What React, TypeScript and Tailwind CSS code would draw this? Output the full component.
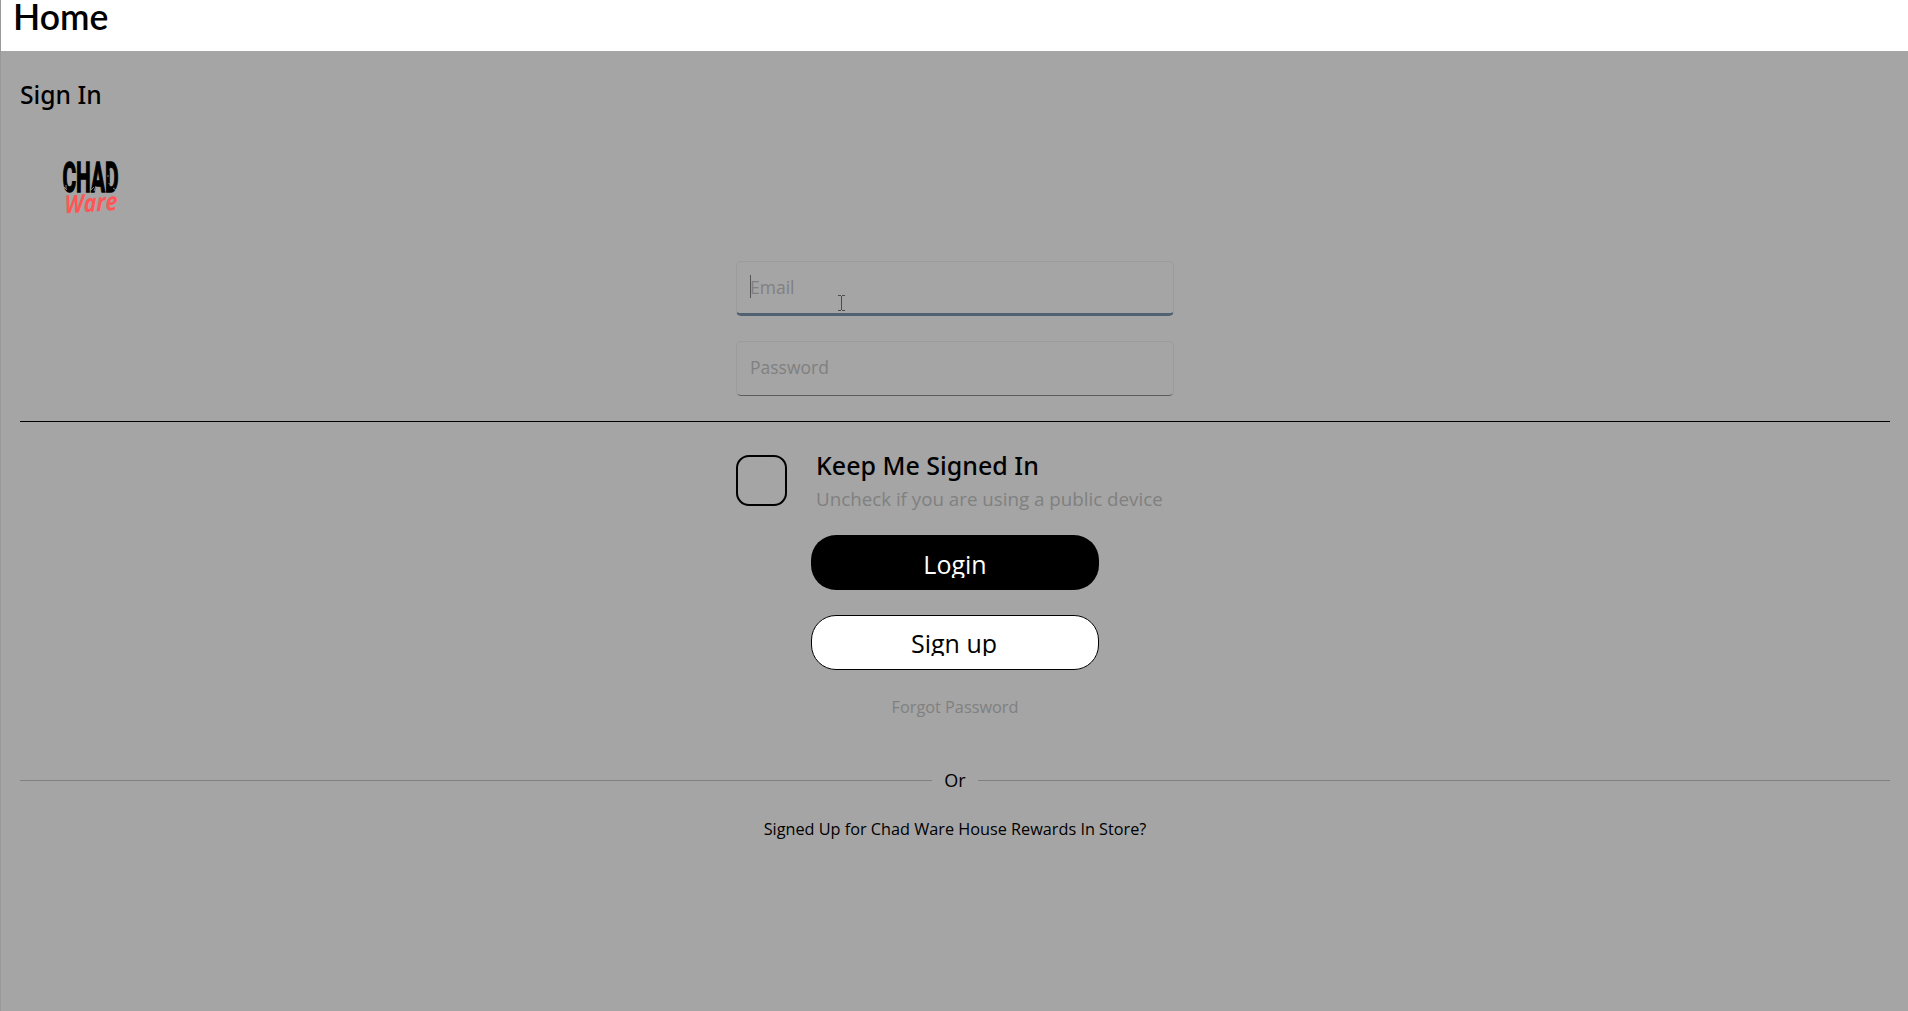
import React from "react";

function Logo() {
  return (
    <svg width="64" height="60" viewBox="0 0 64 60" className="block shrink-0 overflow-visible" aria-label="Chad Ware">
      <g transform="translate(2.500 36)">
        <text
          textLength="56"
          lengthAdjust="spacingAndGlyphs"
          fontSize="43"
          fontWeight="700"
          stroke="#000"
          strokeWidth="1.5"
          className="font-['Roboto',sans-serif]"
        >
          CHAD
        </text>
      </g>
      <path
        d="M49.500 13.500l1.500 2M47 20h2M51 19l1 3M48.500 27l2 2M4 31l3 3M6 29v4M31 34l3-3M53 32l3 2M36 30l-2 5M15 10l2-1"
        stroke="#a5a5a5"
        strokeWidth="0.8"
        fill="none"
      />
      <g transform="translate(4.500 57.500) rotate(-4) skewX(-4)">
        <text
          textLength="53"
          lengthAdjust="spacingAndGlyphs"
          fontSize="25"
          fontWeight="700"
          fontStyle="italic"
          fill="#ff5757"
          className="font-['Open_Sans',sans-serif]"
        >
          Ware
        </text>
      </g>
    </svg>
  );
}

function Field({ label, focused = false }: { label: string; focused?: boolean }) {
  return (
    <div
      className={
        focused
          ? "relative flex h-[55px] w-[438px] overflow-hidden rounded-[5px] border border-b-[3px] border-[#9b9b9b] border-b-[#506272] pl-[13px] pt-[13px]"
          : "relative flex h-[55px] w-[438px] overflow-hidden rounded-[5px] border border-[#9b9b9b] border-b-[#5c5c5c] pl-[13px] pt-[13px]"
      }
    >
      {focused && <span className="absolute left-[13px] top-[13px] h-[23px] w-px bg-[#555]" />}
      <span className="text-[17.500px] leading-6 text-[#808080]">{label}</span>
      {focused && (
        <svg width="7" height="16" viewBox="0 0 7 16" className="absolute left-[101px] top-[33px]" shapeRendering="crispEdges">
          <path d="M0 .5h3M4 .5h3M3.500 1v14M0 15.500h3M4 15.500h3" stroke="#4c4c4c" fill="none" />
        </svg>
      )}
    </div>
  );
}

export default function App() {
  return (
    <div className="flex h-[1011px] w-[1908px] flex-col overflow-hidden border-l border-[#9a9a9a] bg-[#a5a5a5] font-['Open_Sans','Noto_Sans',sans-serif] text-black">
      <header className="h-[51px] shrink-0 bg-white pl-[12px]">
        <h1 className="-mt-[2px] font-['Lato',sans-serif] text-[35.500px] font-semibold leading-[38px]">Home</h1>
      </header>
      <main className="flex flex-col pl-[19px] pr-[18px]">
        <h2 className="mt-[28px] h-8 font-['Noto_Sans',sans-serif] text-[24.700px] font-medium leading-8">Sign In</h2>
        <div className="mt-[45px] pl-10">
          <Logo />
        </div>
        <form className="mt-[45px] flex flex-col items-center">
          <Field label="Email" focused />
          <div className="mt-[25px]">
            <Field label="Password" />
          </div>
          <div className="mt-[25px] h-px w-full bg-black" />
          <div className="mt-[33px] flex w-[438px]">
            <div className="h-[51px] w-[51px] shrink-0 rounded-[13px] border-[2.500px] border-black" />
            <div className="ml-[29px] flex flex-col whitespace-nowrap">
              <span className="-mt-[6px] h-8 font-['Noto_Sans',sans-serif] text-[25px] font-medium leading-8">Keep Me Signed In</span>
              <span className="mt-[5px] h-[24px] overflow-hidden text-[18.750px] leading-[26px] text-[#808080]">
                Uncheck if you are using a public device
              </span>
            </div>
          </div>
          <button type="button" className="mt-[25px] flex h-[55px] w-[288px] justify-center rounded-[25px] bg-black pt-[13px] text-white">
            <span className="h-[30px] overflow-hidden text-[25px] leading-[33px]">Login</span>
          </button>
          <button type="button" className="mt-[25px] flex h-[55px] w-[288px] justify-center rounded-[25px] border border-black bg-white pr-[2px] pt-[11px]">
            <span className="h-[29px] overflow-hidden text-[25px] leading-[32px]">Sign up</span>
          </button>
          <a className="mt-[25px] text-[16.300px] leading-6 text-[#808080]">Forgot Password</a>
        </form>
        <div className="mt-[49px] flex h-6 items-center">
          <div className="h-px flex-1 bg-[#808080]" />
          <span className="w-[46px] text-center text-[18px] leading-6">Or</span>
          <div className="h-px flex-1 bg-[#808080]" />
        </div>
        <p className="mt-[25px] text-center text-[16.250px] leading-6">Signed Up for Chad Ware House Rewards In Store?</p>
      </main>
    </div>
  );
}
